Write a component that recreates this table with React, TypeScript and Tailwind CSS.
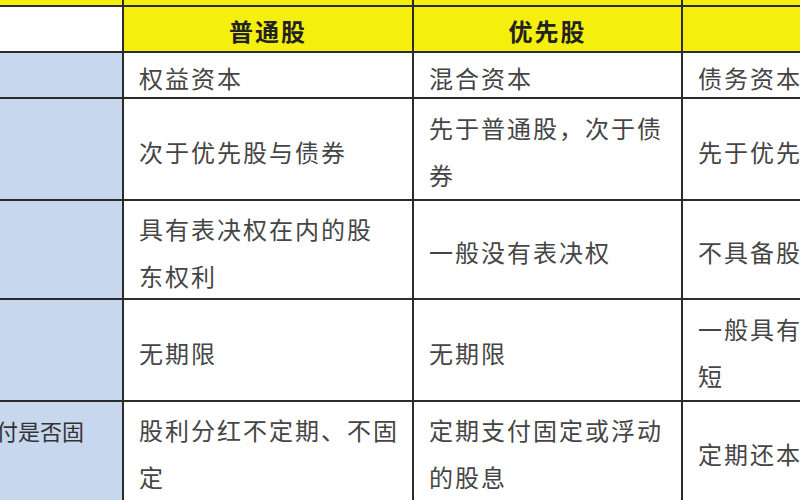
import React from "react";

type Cell = string[];

const headers = ["", "普通股", "优先股", "债券"];

// each row: first column label (mostly cropped off to the left), then the three comparison cells
const rows: { label: Cell; cells: Cell[]; h: string }[] = [
  { label: [], cells: [["权益资本"], ["混合资本"], ["债务资本"]], h: "h-[44px]" },
  {
    label: [],
    cells: [["次于优先股与债券"], ["先于普通股，次于债", "券"], ["先于优先股与普通股"]],
    h: "h-[100px]",
  },
  {
    label: [],
    cells: [["具有表决权在内的股", "东权利"], ["一般没有表决权"], ["不具备股东权利"]],
    h: "h-[97px]",
  },
  {
    label: [],
    cells: [["无期限"], ["无期限"], ["一般具有固定期限，较", "短"]],
    h: "h-[100px]",
  },
  {
    label: ["股利支付是否固", "定"],
    cells: [["股利分红不定期、不固", "定"], ["定期支付固定或浮动", "的股息"], ["定期还本付息"]],
    h: "h-[98px]",
  },
];

const font = "font-['Noto_Sans_CJK_SC','Noto_Sans',sans-serif]";

export default function App() {
  return (
    <div className={`w-[800px] h-[500px] overflow-hidden bg-white ${font}`}>
      <div className="grid grid-cols-[122px_288px_267px_400px] gap-[2px] bg-[#2b2b2b] w-max">
        {/* yellow band left over from the row above */}
        {headers.map((_, i) => (
          <div key={"band" + i} className="h-[5px] bg-[#f4ef0c]" />
        ))}

        {/* header row */}
        {headers.map((t, i) => (
          <div
            key={"hd" + i}
            className={`h-[44px] flex items-center justify-center pt-1 text-[24px] font-bold tracking-[2px] text-[#222] ${
              i === 0 ? "bg-white" : "bg-[#f4ef0c]"
            }`}
          >
            {t}
          </div>
        ))}

        {rows.map((r, ri) => (
          <React.Fragment key={ri}>
            <div className={`${r.h} bg-[#c7d7ee] overflow-hidden flex items-center`}>
              {r.label.length > 0 && (
                <div className="ml-[-70px] text-[22px] leading-[46px] text-[#333] whitespace-nowrap pt-1">
                  {r.label.map((l, li) => (
                    <div key={li}>{l}</div>
                  ))}
                </div>
              )}
            </div>
            {r.cells.map((c, ci) => (
              <div
                key={ci}
                className={`${r.h} bg-white overflow-hidden flex items-center pl-[15px] pt-1`}
              >
                <div className="text-[24px] tracking-[2px] leading-[47px] text-[#454545] whitespace-nowrap">
                  {c.map((l, li) => (
                    <div key={li}>{l}</div>
                  ))}
                </div>
              </div>
            ))}
          </React.Fragment>
        ))}
      </div>
    </div>
  );
}
